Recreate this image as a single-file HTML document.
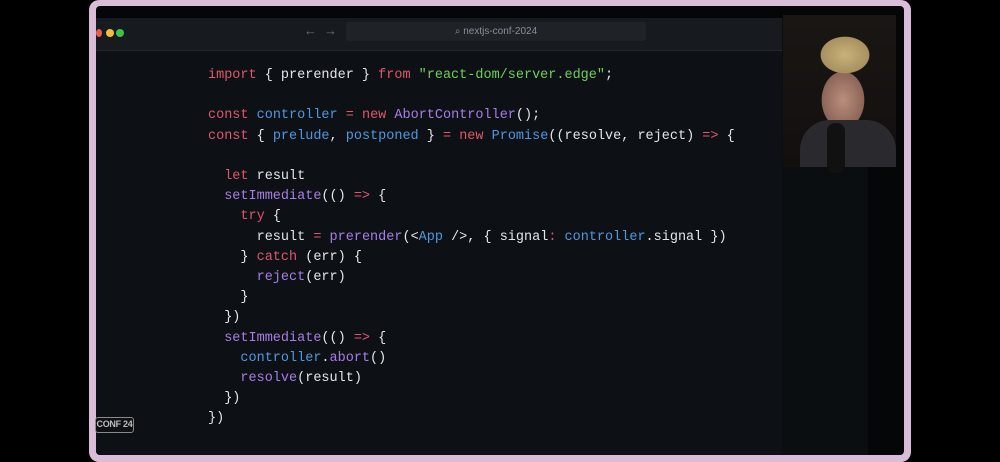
<!DOCTYPE html>
<html><head><style>
body{margin:0;width:1000px;height:462px;background:#000;position:relative;overflow:hidden;font-family:"Liberation Mono",monospace}
.frame{position:absolute;left:89px;top:0;width:822px;height:462px;background:#d9bcd7;border-radius:10px}
.inner{position:absolute;left:96px;top:6px;width:808px;height:449px;background:#050607;border-radius:4px;overflow:hidden}
.title{position:absolute;left:0;top:12px;width:686px;height:32px;background:#171a1e;border-bottom:1px solid #23272c}
.code{position:absolute;left:0;top:45px;width:686px;height:404px;background:#0d1115}
.right{position:absolute;left:686px;top:12px;width:86px;height:437px;background:#0b0e11}
.dot{position:absolute;top:11px;width:8px;height:8px;border-radius:50%}
.url{position:absolute;left:250px;top:4px;width:300px;height:19px;background:#1f2327;border-radius:3px;color:#8a8f95;font:10px "Liberation Sans",sans-serif;line-height:19px;text-align:center}
.arr{position:absolute;top:5px;color:#6b7075;font:13px "Liberation Sans",sans-serif}
pre{position:absolute;left:112px;top:60px;margin:0;font-size:13.5px;line-height:20.2px;color:#e4e6e8;font-family:"Liberation Mono",monospace}
.k{color:#e0566b}.b{color:#4f98e0}.p{color:#a77de6}.g{color:#6fcf5a}
.cam{position:absolute;left:687px;top:9px;width:113px;height:152px;background:radial-gradient(ellipse 40px 30px at 62px 40px,#c9b27a 0%,#a89060 60%,transparent 62%),radial-gradient(ellipse 30px 40px at 60px 85px,#b98e7c 0%,#8c6558 70%,transparent 72%),linear-gradient(#1a1614,#120f0e);}
.body{position:absolute;left:17px;top:105px;width:96px;height:47px;background:#2a2a2e;border-radius:30px 30px 0 0}
.mic{position:absolute;left:44px;top:108px;width:18px;height:50px;background:#111;border-radius:8px}
.badge{position:absolute;left:95px;top:417px;width:39px;height:16px;border:1.5px solid #8a8a8a;border-radius:3px;color:#bbb;font:bold 9px "Liberation Sans",sans-serif;line-height:13px;text-align:center;box-sizing:border-box;white-space:nowrap;letter-spacing:-0.3px}
</style></head><body>
<div class="frame"></div>
<div class="inner">
  <div class="title">
    <div class="dot" style="left:0;width:6px;background:#e85e4e"></div>
    <div class="dot" style="left:10px;background:#f2bd3a"></div>
    <div class="dot" style="left:20px;background:#3dc24a"></div>
    <div class="arr" style="left:208px">←</div><div class="arr" style="left:228px">→</div>
    <div class="url">⌕ nextjs-conf-2024</div>
  </div>
  <div class="code"></div>
  <div class="right"></div>
  <div class="cam"><div class="body"></div><div class="mic"></div></div>
  <pre><span class="k">import</span> { prerender } <span class="k">from</span> <span class="g">"react-dom/server.edge"</span>;

<span class="k">const</span> <span class="b">controller</span> <span class="k">=</span> <span class="k">new</span> <span class="p">AbortController</span>();
<span class="k">const</span> { <span class="b">prelude</span>, <span class="b">postponed</span> } <span class="k">=</span> <span class="k">new</span> <span class="b">Promise</span>((resolve, reject) <span class="k">=&gt;</span> {

  <span class="k">let</span> result
  <span class="p">setImmediate</span>(() <span class="k">=&gt;</span> {
    <span class="k">try</span> {
      result <span class="k">=</span> <span class="p">prerender</span>(&lt;<span class="b">App</span> /&gt;, { signal<span class="k">:</span> <span class="b">controller</span>.signal })
    } <span class="k">catch</span> (err) {
      <span class="p">reject</span>(err)
    }
  })
  <span class="p">setImmediate</span>(() <span class="k">=&gt;</span> {
    <span class="b">controller</span>.<span class="p">abort</span>()
    <span class="p">resolve</span>(result)
  })
})</pre>
</div>
<div class="badge">CONF 24</div>
</body></html>
